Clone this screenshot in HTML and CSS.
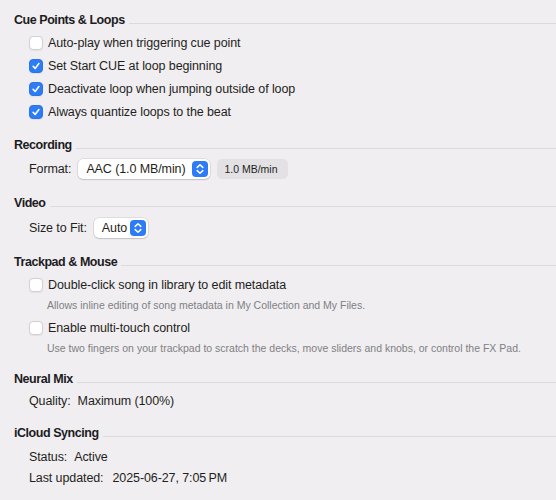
FILE: index.html
```html
<!DOCTYPE html>
<html lang="en">
<head>
<meta charset="utf-8">
<title>Preferences</title>
<link rel="stylesheet" href="styles.css">
</head>
<body>
<div class="page">
  <section class="section first">
    <div class="heading"><h2>Cue Points &amp; Loops</h2><span class="rule"></span></div>
    <label class="check-row"><span class="box"></span><span>Auto-play when triggering cue point</span></label>
    <label class="check-row"><span class="box on"><svg viewBox="0 0 14 14"><path d="M3.6 7.3 L6 9.8 L10.4 4.2"/></svg></span><span>Set Start CUE at loop beginning</span></label>
    <label class="check-row"><span class="box on"><svg viewBox="0 0 14 14"><path d="M3.6 7.3 L6 9.8 L10.4 4.2"/></svg></span><span>Deactivate loop when jumping outside of loop</span></label>
    <label class="check-row"><span class="box on"><svg viewBox="0 0 14 14"><path d="M3.6 7.3 L6 9.8 L10.4 4.2"/></svg></span><span>Always quantize loops to the beat</span></label>
  </section>

  <section class="section">
    <div class="heading"><h2>Recording</h2><span class="rule"></span></div>
    <div class="field-row">
      <span class="label">Format:</span>
      <span class="popup wide"><span class="popup-text">AAC (1.0 MB/min)</span><span class="stepper"><svg viewBox="0 0 16 16"><path d="M5.2 6.4 L8 3.7 L10.8 6.4 M5.2 9.6 L8 12.3 L10.8 9.6"/></svg></span></span>
      <span class="tag">1.0 MB/min</span>
    </div>
  </section>

  <section class="section">
    <div class="heading"><h2>Video</h2><span class="rule"></span></div>
    <div class="field-row video-row">
      <span class="label">Size to Fit:</span>
      <span class="popup small"><span class="popup-text">Auto</span><span class="stepper"><svg viewBox="0 0 16 16"><path d="M5.2 6.4 L8 3.7 L10.8 6.4 M5.2 9.6 L8 12.3 L10.8 9.6"/></svg></span></span>
    </div>
  </section>

  <section class="section">
    <div class="heading"><h2>Trackpad &amp; Mouse</h2><span class="rule"></span></div>
    <label class="check-row"><span class="box"></span><span>Double-click song in library to edit metadata</span></label>
    <p class="desc">Allows inline editing of song metadata in My Collection and My Files.</p>
    <label class="check-row second"><span class="box"></span><span>Enable multi-touch control</span></label>
    <p class="desc">Use two fingers on your trackpad to scratch the decks, move sliders and knobs, or control the FX Pad.</p>
  </section>

  <section class="section">
    <div class="heading"><h2>Neural Mix</h2><span class="rule"></span></div>
    <div class="info-row"><span class="label">Quality:</span><span>Maximum (100%)</span></div>
  </section>

  <section class="section">
    <div class="heading"><h2>iCloud Syncing</h2><span class="rule"></span></div>
    <div class="info-row status"><span class="label">Status:</span><span>Active</span></div>
    <div class="info-row"><span class="label">Last updated:</span><span class="date">2025-06-27, 7:05&#8239;PM</span></div>
  </section>
</div>
</body>
</html>
```

FILE: styles.css
```css
html, body {
  margin: 0;
  padding: 0;
  background: #f0eef1;
}

body {
  font-family: "Liberation Sans", Arial, sans-serif;
  font-size: 12.5px;
  letter-spacing: -0.1px;
  color: #1f1f21;
  width: 556px;
  height: 500px;
  overflow: hidden;
  white-space: nowrap;
}

.page {
  padding: 10px 0 0 14px;
  display: flex;
  flex-direction: column;
}

.section {
  display: flex;
  flex-direction: column;
  margin-top: 12px;
}

.section.first {
  margin-top: 0;
}

.heading {
  display: flex;
  align-items: center;
  height: 20px;
  margin-bottom: 1px;
}

.heading h2 {
  margin: 0;
  font-size: 12.5px;
  font-weight: 700;
  letter-spacing: -0.45px;
  color: #1c1c1e;
}

.rule {
  flex: 1;
  height: 1px;
  background: #dcdadd;
  margin-left: 4px;
  margin-top: 6px;
}

.check-row {
  display: flex;
  align-items: center;
  height: 23px;
  padding-left: 15px;
  gap: 5px;
}

.check-row.second {
  margin-top: 2px;
}

.box {
  width: 14px;
  height: 14px;
  box-sizing: border-box;
  border-radius: 4px;
  background: #ffffff;
  border: 1px solid #d2d0d3;
  box-shadow: 0 0.5px 1px rgba(0, 0, 0, 0.06);
  display: flex;
  align-items: center;
  justify-content: center;
  flex: none;
}

.box.on {
  background: #2d7cf6;
  border-color: #2a74e8;
}

.box svg {
  width: 14px;
  height: 14px;
}

.box svg path {
  fill: none;
  stroke: #ffffff;
  stroke-width: 1.8;
  stroke-linecap: round;
  stroke-linejoin: round;
}

.field-row {
  display: flex;
  align-items: center;
  height: 24px;
  margin-top: 1px;
  padding-left: 15px;
}

.video-row {
  margin-top: 2px;
}

.label {
  margin-right: 7px;
}

.popup {
  display: flex;
  align-items: center;
  justify-content: space-between;
  height: 20px;
  box-sizing: border-box;
  background: #ffffff;
  border-radius: 5px;
  box-shadow: 0 0 0 0.5px rgba(0, 0, 0, 0.14), 0 1px 1.5px rgba(0, 0, 0, 0.12);
  padding: 0 2px 0 8px;
  flex: none;
}

.popup.wide {
  width: 132px;
}

.popup.small {
  width: 54px;
}

.stepper {
  width: 16px;
  height: 16px;
  border-radius: 4px;
  background: #2d7cf6;
  display: flex;
  align-items: center;
  justify-content: center;
  flex: none;
}

.stepper svg {
  width: 16px;
  height: 16px;
}

.stepper svg path {
  fill: none;
  stroke: #ffffff;
  stroke-width: 1.5;
  stroke-linecap: round;
  stroke-linejoin: round;
}

.tag {
  margin-left: 7px;
  height: 20px;
  width: 71px;
  box-sizing: border-box;
  border-radius: 5px;
  background: #e3e1e4;
  font-size: 10.5px;
  letter-spacing: 0;
  display: flex;
  align-items: center;
  padding-left: 7px;
}

.desc {
  margin: 0;
  height: 18px;
  display: flex;
  align-items: center;
  padding-left: 33px;
  font-size: 10.5px;
  letter-spacing: 0;
  color: #808082;
}

.info-row {
  display: flex;
  align-items: center;
  height: 21px;
  padding-left: 15px;
}

.info-row.status {
  margin-top: 2px;
}

.info-row .date {
  margin-left: 2px;
}
```
